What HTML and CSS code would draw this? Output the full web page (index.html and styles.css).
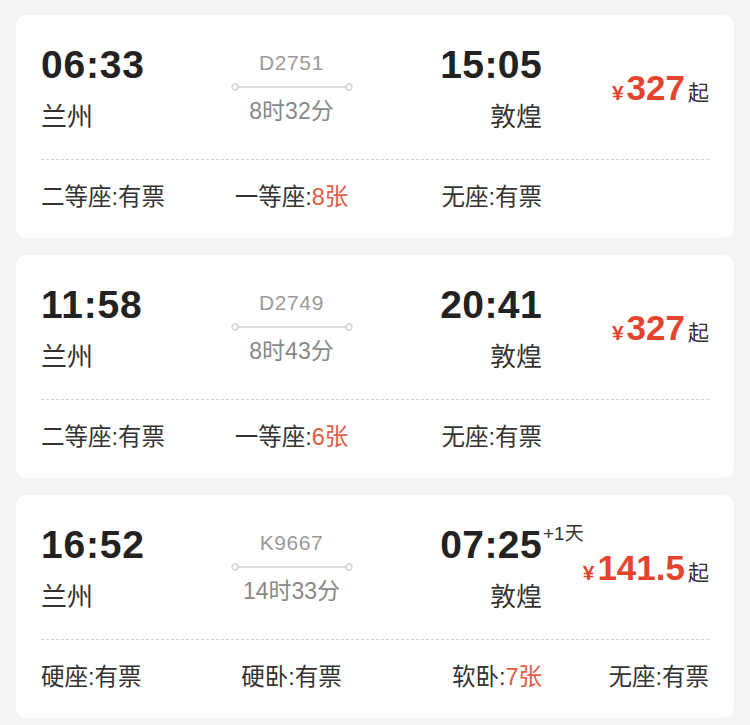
FILE: index.html
```html
<!DOCTYPE html>
<html lang="zh-CN">
<head>
<meta charset="utf-8">
<title>车次列表</title>
<link rel="stylesheet" href="styles.css">
</head>
<body>
<div class="list">
  <div class="card">
    <div class="top">
      <div class="dep">
        <div class="time">06:33</div>
        <div class="station">兰州</div>
      </div>
      <div class="mid">
        <div class="train">D2751</div>
        <svg class="conn" width="122" height="10" viewBox="0 0 122 10"><line x1="6" y1="5" x2="116" y2="5" stroke="#dcdcdc" stroke-width="2"/><circle cx="4" cy="5" r="3" fill="#fff" stroke="#cfcfcf" stroke-width="1.3"/><circle cx="118" cy="5" r="3" fill="#fff" stroke="#cfcfcf" stroke-width="1.3"/></svg>
        <div class="dur">8时32分</div>
      </div>
      <div class="arr">
        <div class="time">15:05</div>
        <div class="station">敦煌</div>
      </div>
      <div class="price"><span class="yen">¥</span><span class="num">327</span><span class="qi">起</span></div>
    </div>
    <div class="sep"></div>
    <div class="seats">
      <div class="seat s1">二等座:有票</div>
      <div class="seat s2">一等座:<span class="cnt">8张</span></div>
      <div class="seat s3">无座:有票</div>
    </div>
  </div>

  <div class="card">
    <div class="top">
      <div class="dep">
        <div class="time">11:58</div>
        <div class="station">兰州</div>
      </div>
      <div class="mid">
        <div class="train">D2749</div>
        <svg class="conn" width="122" height="10" viewBox="0 0 122 10"><line x1="6" y1="5" x2="116" y2="5" stroke="#dcdcdc" stroke-width="2"/><circle cx="4" cy="5" r="3" fill="#fff" stroke="#cfcfcf" stroke-width="1.3"/><circle cx="118" cy="5" r="3" fill="#fff" stroke="#cfcfcf" stroke-width="1.3"/></svg>
        <div class="dur">8时43分</div>
      </div>
      <div class="arr">
        <div class="time">20:41</div>
        <div class="station">敦煌</div>
      </div>
      <div class="price"><span class="yen">¥</span><span class="num">327</span><span class="qi">起</span></div>
    </div>
    <div class="sep"></div>
    <div class="seats">
      <div class="seat s1">二等座:有票</div>
      <div class="seat s2">一等座:<span class="cnt">6张</span></div>
      <div class="seat s3">无座:有票</div>
    </div>
  </div>

  <div class="card">
    <div class="top">
      <div class="dep">
        <div class="time">16:52</div>
        <div class="station">兰州</div>
      </div>
      <div class="mid">
        <div class="train">K9667</div>
        <svg class="conn" width="122" height="10" viewBox="0 0 122 10"><line x1="6" y1="5" x2="116" y2="5" stroke="#dcdcdc" stroke-width="2"/><circle cx="4" cy="5" r="3" fill="#fff" stroke="#cfcfcf" stroke-width="1.3"/><circle cx="118" cy="5" r="3" fill="#fff" stroke="#cfcfcf" stroke-width="1.3"/></svg>
        <div class="dur">14时33分</div>
      </div>
      <div class="arr">
        <div class="time"><span class="tw">07:25<span class="plus">+1天</span></span></div>
        <div class="station">敦煌</div>
      </div>
      <div class="price"><span class="yen">¥</span><span class="num">141.5</span><span class="qi">起</span></div>
    </div>
    <div class="sep"></div>
    <div class="seats">
      <div class="seat s1">硬座:有票</div>
      <div class="seat s2">硬卧:有票</div>
      <div class="seat s3">软卧:<span class="cnt">7张</span></div>
      <div class="seat s4">无座:有票</div>
    </div>
  </div>
</div>
</body>
</html>
```

FILE: styles.css
```css
* { box-sizing: border-box; }
html, body {
  margin: 0;
  background: #f4f4f4;
}
body {
  font-family: "Liberation Sans", "Noto Sans CJK SC", sans-serif;
  color: #333;
}
.list {
  padding: 15px 16px 0;
  display: flex;
  flex-direction: column;
  gap: 17px;
}
.card {
  background: #fff;
  border-radius: 11px;
  padding: 28px 25px 26px;
}
.top {
  display: grid;
  grid-template-columns: repeat(4, 1fr);
  align-items: start;
}
.time {
  font-size: 39px;
  line-height: 44px;
  font-weight: bold;
  letter-spacing: 0.8px;
  color: #222;
}
.tw {
  position: relative;
  display: inline-block;
}
.plus {
  position: absolute;
  left: 100%;
  top: 0;
  margin-left: 1px;
  font-size: 19px;
  line-height: 22px;
  font-weight: normal;
  letter-spacing: 0;
  color: #333;
  white-space: nowrap;
}
.station {
  margin-top: 15px;
  font-size: 26px;
  line-height: 30px;
  color: #333;
}
.arr {
  text-align: right;
}
.arr .time {
  letter-spacing: 0.4px;
}
.mid {
  display: flex;
  flex-direction: column;
  align-items: center;
}
.train {
  margin-top: 7px;
  font-size: 21px;
  line-height: 26px;
  letter-spacing: 0.6px;
  color: #999;
}
.conn {
  display: block;
  margin-top: 6px;
}
.dur {
  margin-top: 5px;
  font-size: 23px;
  line-height: 28px;
  color: #888;
}
.price {
  align-self: center;
  justify-self: end;
  white-space: nowrap;
  color: #e4432d;
  font-weight: bold;
}
.yen {
  font-size: 21px;
  margin-right: 3px;
}
.num {
  font-size: 35px;
  line-height: 40px;
}
.qi {
  font-size: 21px;
  font-weight: normal;
  color: #333;
  margin-left: 3px;
}
.sep {
  margin-top: 27px;
  border-top: 1px dashed #d0d0d0;
}
.seats {
  margin-top: 22px;
  display: grid;
  grid-template-columns: repeat(4, 1fr);
}
.seat {
  font-size: 23.5px;
  line-height: 30px;
  color: #333;
  white-space: nowrap;
}
.s1 { justify-self: start; }
.s2 { justify-self: center; }
.s3 { justify-self: end; }
.s4 { justify-self: end; }
.cnt {
  color: #e25a44;
}
```
